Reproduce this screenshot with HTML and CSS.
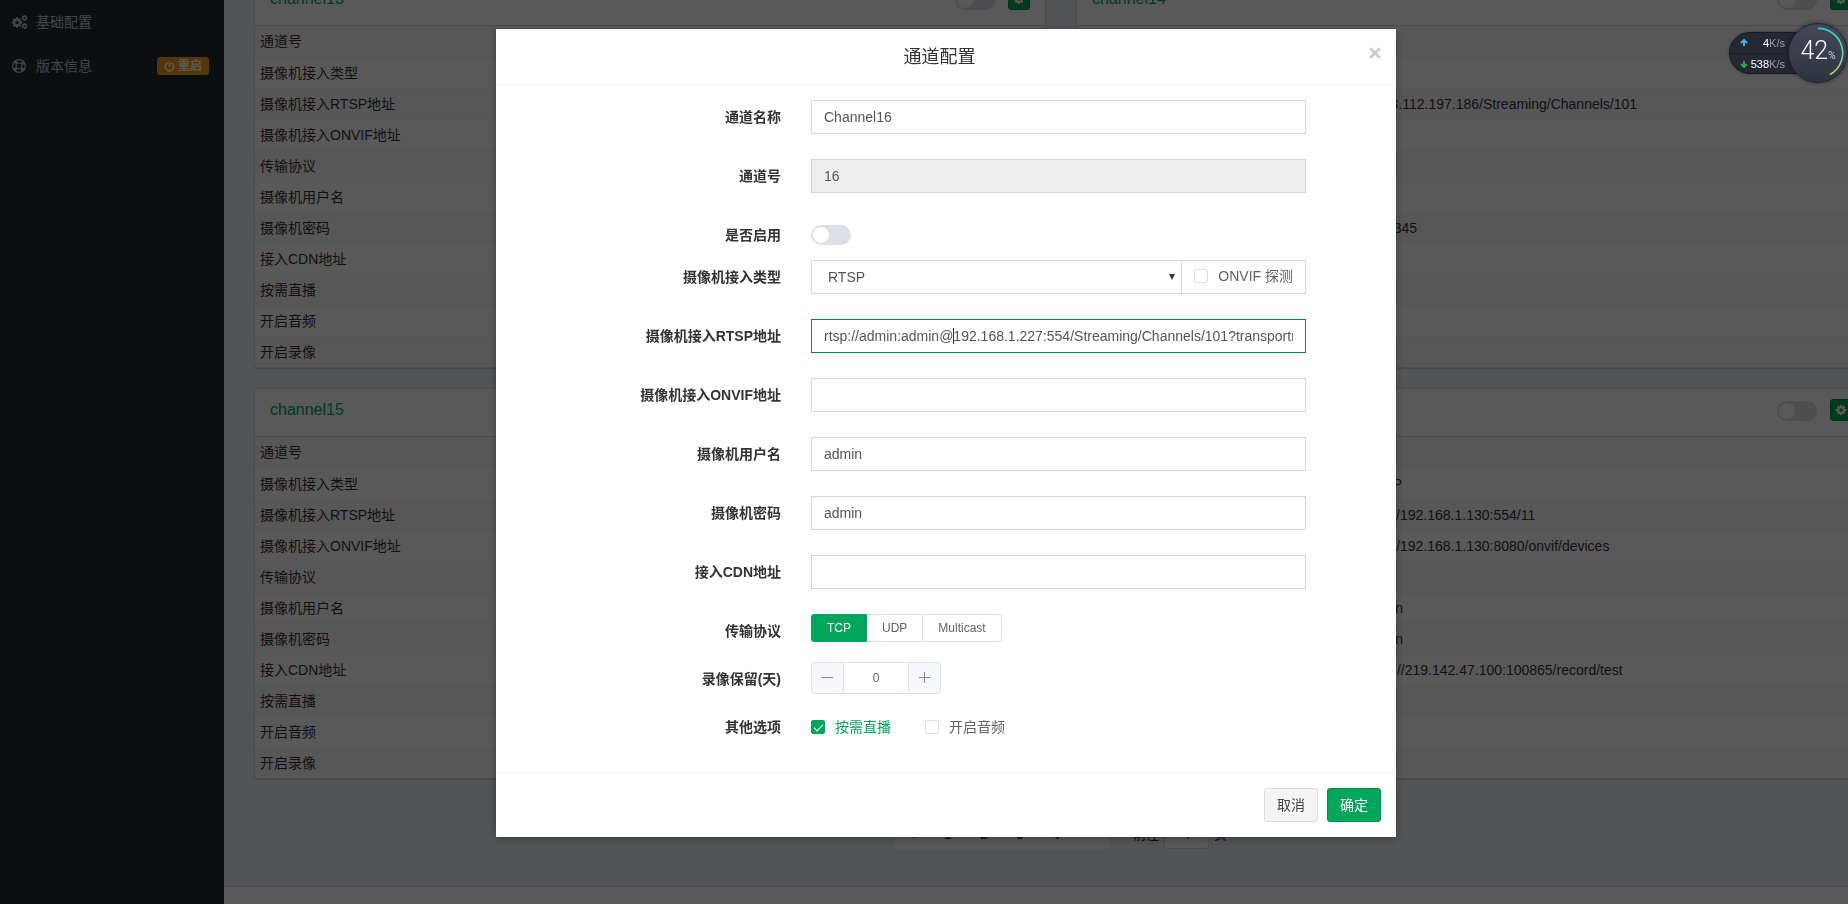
FILE: index.html
```html
<!DOCTYPE html>
<html lang="zh-CN">
<head>
<meta charset="utf-8">
<title>通道配置</title>
<link rel="stylesheet" href="styles.css">
</head>
<body>
<svg class="defs" aria-hidden="true">
  <symbol id="cog" viewBox="0 0 1792 1792"><path d="M1152 896q0-106-75-181t-181-75-181 75-75 181 75 181 181 75 181-75 75-181zm512-109v222q0 12-8 23t-20 13l-185 28q-19 54-39 91 35 50 107 138 10 12 10 25t-9 23q-27 37-99 108t-94 71q-12 0-26-9l-138-108q-44 23-91 38-16 136-29 186-7 28-36 28h-222q-14 0-24.500-8.500t-11.500-21.500l-28-184q-49-16-90-37l-141 107q-10 9-25 9-14 0-25-11-126-114-165-168-7-10-7-23 0-12 8-23 15-21 51-66.500t54-70.500q-27-50-41-99l-183-27q-13-2-21-12.500t-8-23.500v-222q0-12 8-23t19-13l186-28q14-46 39-92-40-57-107-138-10-12-10-24 0-10 9-23 26-36 98.500-107.500t94.500-71.500q13 0 26 10l138 107q44-23 91-38 16-136 29-186 7-28 36-28h222q14 0 24.500 8.500t11.500 21.500l28 184q49 16 90 37l142-107q9-9 24-9 13 0 25 10 129 119 165 170 7 8 7 22 0 12-8 23-15 21-51 66.500t-54 70.500q26 50 41 98l183 28q13 2 21 12.500t8 23.500z"/></symbol>
</svg>
<div class="app">
  <nav class="sidebar">
    <a class="nav-item" href="#config">
      <svg class="nav-icon" viewBox="0 0 16 14"><use href="#cog" x="-1" y="1.500" width="12" height="12"/><use href="#cog" x="9" y="-.5" width="7" height="7"/><use href="#cog" x="9" y="7.500" width="7" height="7"/></svg>
      <span>基础配置</span>
    </a>
    <a class="nav-item" href="#version">
      <svg class="nav-icon" viewBox="0 0 16 14"><g fill="none" stroke="currentColor"><circle cx="7" cy="7" r="6.300" stroke-width="1.300"/><circle cx="7" cy="7" r="3" stroke-width="1.200"/><circle cx="7" cy="7" r="4.700" stroke-width="3" stroke-dasharray="2.600 4.783" stroke-dashoffset="-2.400"/></g></svg>
      <span>版本信息</span>
      <span class="badge"><svg class="badge-icon" viewBox="0 0 12 12"><path d="M3.500 2.400a4.600 4.600 0 1 0 5 0M6 .8v5" fill="none" stroke="currentColor" stroke-width="1.700" stroke-linecap="round"/></svg>重启</span>
    </a>
  </nav>
  <main class="main">
    <div class="cards">
      <section class="card">
        <header class="card-head"><h2>channel13</h2><input class="switch" type="checkbox" aria-label="启用 channel13"><button class="gear" aria-label="配置"><svg viewBox="0 0 12 12"><use href="#cog"/></svg></button></header>
        <table>
          <tr><th>通道号</th><td>13</td></tr><tr><th>摄像机接入类型</th><td></td></tr><tr><th>摄像机接入RTSP地址</th><td></td></tr><tr><th>摄像机接入ONVIF地址</th><td></td></tr><tr><th>传输协议</th><td></td></tr><tr><th>摄像机用户名</th><td></td></tr><tr><th>摄像机密码</th><td></td></tr><tr><th>接入CDN地址</th><td></td></tr><tr><th>按需直播</th><td></td></tr><tr><th>开启音频</th><td></td></tr><tr><th>开启录像</th><td></td></tr>
        </table>
      </section>
      <section class="card card-compact">
        <header class="card-head"><h2>channel14</h2><input class="switch" type="checkbox" aria-label="启用 channel14"><button class="gear" aria-label="配置"><svg viewBox="0 0 12 12"><use href="#cog"/></svg></button></header>
        <table>
          <tr><th>通道号</th><td>14</td></tr><tr><th>摄像机接入类型</th><td>RTSP</td></tr><tr><th>摄像机接入RTSP地址</th><td>rtsp://223.112.197.186/Streaming/Channels/101</td></tr><tr><th>摄像机接入ONVIF地址</th><td></td></tr><tr><th>传输协议</th><td>TCP</td></tr><tr><th>摄像机用户名</th><td>admin</td></tr><tr><th>摄像机密码</th><td>admin12345</td></tr><tr><th>接入CDN地址</th><td></td></tr><tr><th>按需直播</th><td></td></tr><tr><th>开启音频</th><td></td></tr><tr><th>开启录像</th><td></td></tr>
        </table>
      </section>
      <section class="card">
        <header class="card-head"><h2>channel15</h2><input class="switch" type="checkbox" aria-label="启用 channel15"><button class="gear" aria-label="配置"><svg viewBox="0 0 12 12"><use href="#cog"/></svg></button></header>
        <table>
          <tr><th>通道号</th><td>15</td></tr><tr><th>摄像机接入类型</th><td></td></tr><tr><th>摄像机接入RTSP地址</th><td></td></tr><tr><th>摄像机接入ONVIF地址</th><td></td></tr><tr><th>传输协议</th><td></td></tr><tr><th>摄像机用户名</th><td></td></tr><tr><th>摄像机密码</th><td></td></tr><tr><th>接入CDN地址</th><td></td></tr><tr><th>按需直播</th><td></td></tr><tr><th>开启音频</th><td></td></tr><tr><th>开启录像</th><td></td></tr>
        </table>
      </section>
      <section class="card">
        <header class="card-head"><h2>Channel16</h2><input class="switch" type="checkbox" aria-label="启用 Channel16"><button class="gear" aria-label="配置"><svg viewBox="0 0 12 12"><use href="#cog"/></svg></button></header>
        <table>
          <tr><th>通道号</th><td>16</td></tr><tr><th>摄像机接入类型</th><td>RTSP</td></tr><tr><th>摄像机接入RTSP地址</th><td>rtsp://192.168.1.130:554/11</td></tr><tr><th>摄像机接入ONVIF地址</th><td>http://192.168.1.130:8080/onvif/devices</td></tr><tr><th>传输协议</th><td>TCP</td></tr><tr><th>摄像机用户名</th><td>admin</td></tr><tr><th>摄像机密码</th><td>admin</td></tr><tr><th>接入CDN地址</th><td>rtmp://219.142.47.100:100865/record/test</td></tr><tr><th>按需直播</th><td></td></tr><tr><th>开启音频</th><td></td></tr><tr><th>开启录像</th><td></td></tr>
        </table>
      </section>
    </div>
    <div class="pager">
      <div class="pages">
        <button aria-label="上一页"><svg viewBox="0 0 12 12"><path d="M8 1 3 6l5 5"/></svg></button><button>1</button><button>2</button><button>3</button><button>4</button><button class="next" aria-label="下一页"><svg viewBox="0 0 12 12"><path d="m4 1 5 5-5 5"/></svg></button>
      </div>
      <label class="jump">前往<input type="text" value="4">页</label>
    </div>
    <footer class="footer"></footer>
  </main>
</div>

<div class="backdrop">
  <div class="dialog" role="dialog" aria-labelledby="dialog-title">
    <header class="dialog-head">
      <h1 id="dialog-title">通道配置</h1>
      <button class="close" aria-label="关闭"><svg viewBox="0 0 10 10"><path d="m1 1 8 8M9 1 1 9"/></svg></button>
    </header>
    <form class="form">
      <div class="row"><label for="name">通道名称</label><input class="text" id="name" type="text" value="Channel16"></div>
      <div class="row"><label for="number">通道号</label><input class="text" id="number" type="text" value="16" readonly></div>
      <div class="row row-tight"><label for="enable">是否启用</label><div class="field"><input class="switch" id="enable" type="checkbox"></div></div>
      <div class="row"><label for="type">摄像机接入类型</label>
        <div class="group">
          <div class="select"><select id="type"><option>RTSP</option><option>ONVIF</option></select><svg viewBox="0 0 6 6"><path d="M0 0h6L3 6z"/></svg></div>
          <label class="addon"><input class="check" type="checkbox">ONVIF 探测</label>
        </div>
      </div>
      <div class="row"><label for="rtsp">摄像机接入RTSP地址</label><div class="focus-box"><input class="text active" id="rtsp" type="text" value="rtsp://admin:admin@192.168.1.227:554/Streaming/Channels/101?transportmode=unicast"><span class="caret"></span></div></div>
      <div class="row"><label for="onvif">摄像机接入ONVIF地址</label><input class="text" id="onvif" type="text"></div>
      <div class="row"><label for="user">摄像机用户名</label><input class="text" id="user" type="text" value="admin"></div>
      <div class="row"><label for="password">摄像机密码</label><input class="text" id="password" type="text" value="admin"></div>
      <div class="row"><label for="cdn">接入CDN地址</label><input class="text" id="cdn" type="text"></div>
      <div class="row row-short"><span class="label" id="proto">传输协议</span>
        <div class="radios" role="radiogroup" aria-labelledby="proto">
          <label><input type="radio" name="proto" checked><span>TCP</span></label><label><input type="radio" name="proto"><span>UDP</span></label><label><input type="radio" name="proto"><span>Multicast</span></label>
        </div>
      </div>
      <div class="row row-short"><label for="days">录像保留(天)</label>
        <div class="stepper"><button type="button" aria-label="减少"><svg viewBox="0 0 11 11"><path d="M0 5.500h11"/></svg></button><input id="days" type="text" value="0"><button type="button" aria-label="增加"><svg viewBox="0 0 11 11"><path d="M0 5.500h11M5.500 0v11"/></svg></button></div>
      </div>
      <div class="row row-short"><span class="label">其他选项</span>
        <div class="field checks"><label class="on"><input class="check" type="checkbox" checked>按需直播</label><label><input class="check" type="checkbox">开启音频</label></div>
      </div>
    </form>
    <footer class="dialog-foot"><button class="btn">取消</button><button class="btn btn-primary">确定</button></footer>
  </div>
</div>

<aside class="meter">
  <div class="speeds">
    <div><svg class="up" viewBox="0 0 8 8"><path d="M4 7V2M1 4l3-3 3 3"/></svg><b>4</b><i>K/s</i></div>
    <div><svg class="down" viewBox="0 0 8 8"><path d="M4 1v5M1 4l3 3 3-3"/></svg><b>538</b><i>K/s</i></div>
  </div>
  <div class="dial">
    <svg viewBox="0 0 60 60"><defs><linearGradient id="arc" x1="0" y1="0" x2="0" y2="1"><stop offset="0" stop-color="#2fd0c8"/><stop offset=".6" stop-color="#5fd69a"/><stop offset="1" stop-color="#b4d860"/></linearGradient></defs><path d="M30 4.500A25.500 25.500 0 0 1 42.400 52.300" fill="none" stroke="url(#arc)" stroke-width="1.700"/></svg>
    <span>42<small>%</small></span>
  </div>
</aside>
</body>
</html>
```

FILE: styles.css
```css
* { box-sizing: border-box; }
html, body { height: 100%; }
body {
  margin: 0;
  overflow: hidden;
  font: 14px/20px "Liberation Sans", "Noto Sans CJK SC", sans-serif;
  color: #333;
  background: #ecf0f5;
}
button, input, select { font: inherit; color: inherit; margin: 0; }
button { padding: 0; cursor: pointer; }
h1, h2 { margin: 0; font-weight: 400; }
.defs { display: none; }
.app { display: flex; min-height: 100%; }

/* sidebar */
.sidebar { flex: 0 0 224px; background: #222d32; }
.nav-item { display: flex; align-items: center; height: 44px; padding: 0 15px 0 12px; color: #b8c7ce; text-decoration: none; }
.nav-icon { width: 16px; height: 14px; margin-right: 8px; fill: currentColor; }
.badge {
  display: flex; align-items: center; gap: 3px;
  height: 18px; margin-left: auto; padding: 0 7px;
  border-radius: 3px; background: #f39c12; color: #fff;
  font-size: 12px; font-weight: 700; line-height: 18px;
}
.badge-icon { width: 11px; height: 11px; }

/* channel cards */
.main { display: flex; flex-direction: column; flex: 0 0 calc(100% - 174px); margin-top: -23px; }
.cards { display: grid; grid-template-columns: 1fr 1fr; gap: 20px 30px; padding: 0 30px; }
.card { overflow: hidden; border: 1px solid #d9dde2; border-radius: 4px; background: #fff; box-shadow: 0 1px 1px rgba(0, 0, 0, .15); }
.card-head { display: flex; align-items: flex-start; height: 48px; padding: 10px 15px; border-bottom: 1px solid #d2d6de; }
.card-head h2 { flex: 1; font-size: 16px; line-height: 22px; color: #00a65a; }
.card-head .switch { margin: 2px 13px 0 0; }
.gear { width: 22px; height: 22px; border: 1px solid #008d4c; border-radius: 3px; background: #00a65a; }
.gear svg { display: block; width: 12px; height: 12px; margin: 0 auto; fill: #fff; }
table { width: 100%; table-layout: fixed; border-collapse: collapse; }
tr { border-top: 1px solid #f4f4f4; }
tr:first-child { border-top: 0; }
tr:nth-child(odd) { background: #f9f9f9; }
th, td { height: 31px; padding: 0 5px; font-weight: 400; text-align: left; white-space: nowrap; }
th { width: 283px; }
.card-compact th { width: 258px; }

.pager { display: flex; justify-content: center; gap: 24px; padding: 42px 0 37px; font-size: 13px; line-height: 28px; }
.pages { display: flex; background: #fff; }
.pages button { width: 36px; height: 28px; border: 0; background: none; font-weight: 700; }
.pages button:first-child, .pages .next { width: 35px; }
.pages svg { width: 11px; height: 11px; fill: none; stroke: #333; stroke-width: 1; }
.pages .next svg { stroke: #aaa; }
.jump { display: flex; gap: 5px; }
.jump input { width: 45px; height: 28px; border: 1px solid #d2d6de; border-radius: 3px; background: #fff; text-align: center; padding: 0; }
.footer { flex: 1; min-height: 60px; border-top: 1px solid #d2d6de; background: #fff; }

/* switch and tick box */
.switch { appearance: none; flex: none; display: block; width: 40px; height: 20px; padding: 2px; border-radius: 10px; background: #dcdfe6; }
.switch::before { content: ""; display: block; width: 16px; height: 16px; border-radius: 50%; background: #fff; }
.check { appearance: none; flex: none; display: block; width: 14px; height: 14px; border: 1px solid #dcdfe6; border-radius: 2px; background: #fff; }
.check:checked { border-color: #00a65a; background: #00a65a; }
.check:checked::before { content: ""; display: block; width: 4px; height: 8px; margin: 1px 0 0 4px; border: solid #fff; border-width: 0 1px 1px 0; transform: rotate(45deg); }

/* dialog */
.backdrop { position: fixed; inset: 0 -44px 0 0; padding-top: 29px; background: rgba(0, 0, 0, .65); }
.dialog { max-width: 900px; margin: 0 auto; background: #fff; box-shadow: 0 2px 8px rgba(0, 0, 0, .3); }
.dialog-head { position: relative; padding: 16px 28px 14px 15px; border-bottom: 1px solid #f4f4f4; text-align: center; }
.dialog-head h1 { font-size: 18px; line-height: 25px; }
.close { position: absolute; top: 18px; right: 15px; width: 12px; height: 12px; border: 0; background: none; }
.close svg { display: block; width: 12px; height: 12px; fill: none; stroke: #ccc; stroke-width: 2.500; }
.form { padding: 15px 0 14px; }
.row { display: grid; grid-template-columns: 4fr 7fr 1fr; margin-bottom: 25px; align-items: start; }
.row > * { margin: 0 15px; min-width: 0; }
.row > label, .label { font-weight: 700; line-height: 20px; padding-top: 7px; text-align: right; }
.row-tight { margin-bottom: 15px; }
.row-short { margin-bottom: 15px; min-height: 33px; }
.field { padding-top: 7px; }
.text { height: 34px; padding: 6px 12px; border: 1px solid #d2d6de; border-radius: 0; outline: 0; background: #fff; color: #555; }
.text[readonly] { background: #eee; }
.text.active { display: block; width: 100%; border-color: #008d4c; }
.focus-box { position: relative; }
.caret { position: absolute; top: 9px; left: 142px; width: 1px; height: 16px; background: #333; }
.group { display: flex; height: 34px; border: 1px solid #d2d6de; color: #606266; }
.select { position: relative; flex: 1; }
.select select { appearance: none; width: 100%; height: 32px; padding: 0 16px; border: 0; background: #fff; color: #555; }
.select svg { position: absolute; right: 6px; top: 13px; width: 6px; height: 6px; fill: #333; }
.addon { display: flex; align-items: center; gap: 10px; padding: 0 12px 2px; border-left: 1px solid #d2d6de; }

.radios { display: flex; color: #606266; font-size: 12px; line-height: 26px; }
.radios input { position: absolute; opacity: 0; }
.radios span { display: block; padding: 0 15px; border: 1px solid #dcdfe6; border-left: 0; }
.radios label:first-child span { border-left: 1px solid #dcdfe6; border-radius: 3px 0 0 3px; }
.radios label:last-child span { border-radius: 0 3px 3px 0; }
.radios label:first-child input:checked + span { border-color: #00a65a; background: #00a65a; color: #fff; }
.stepper { display: flex; width: 130px; height: 32px; border: 1px solid #dcdfe6; border-radius: 4px; overflow: hidden; }
.stepper button { width: 31px; border: 0; background: #f5f7fa; }
.stepper svg { width: 11px; height: 11px; fill: none; stroke: #888; stroke-width: 1; }
.stepper input { flex: 1; min-width: 0; border: solid #dcdfe6; border-width: 0 1px; background: #fff; color: #606266; text-align: center; font-size: 12px; padding: 0; }
.checks { display: flex; gap: 34px; color: #606266; }
.checks label { display: flex; align-items: center; gap: 10px; }
.checks .on { color: #00a65a; }

.dialog-foot { display: flex; justify-content: flex-end; gap: 9px; padding: 15px; border-top: 1px solid #f4f4f4; }
.btn { width: 54px; height: 34px; border: 1px solid #ddd; border-radius: 3px; background: #f4f4f4; color: #444; }
.btn-primary { border-color: #008d4c; background: #00a65a; color: #fff; }

/* floating network meter */
.meter { position: fixed; top: 23px; right: 0; display: flex; align-items: center; }
.speeds { width: 71px; height: 42px; margin-right: -12px; border: 1px solid #171a22; border-radius: 21px 0 0 21px; background: #242833; color: #fff; font: 11px/20px "Liberation Sans", sans-serif; box-shadow: 0 0 3px rgba(0, 0, 0, .4); }
.speeds div { display: flex; align-items: center; padding: 0 14px 0 10px; }
.speeds div + div { border-top: 1px solid #1b1e27; }
.speeds svg { flex: none; width: 8px; height: 8px; fill: none; stroke-width: 2; }
.up { stroke: #45aee8; }
.down { stroke: #2eaa3c; }
.speeds b { flex: 1; text-align: right; font-weight: 400; }
.speeds i { font-style: normal; color: #9a9ca3; }
.dial { position: relative; display: grid; place-items: center; width: 60px; height: 60px; border: 1px solid #1f222c; border-radius: 50%; background: linear-gradient(#444959, #2f3340); color: #f4f4f4; box-shadow: 0 0 4px rgba(0, 0, 0, .5); }
.dial svg { position: absolute; inset: 0; }
.dial span { font: 300 25px/30px Roboto, sans-serif; }
.dial small { font-size: 10px; }
```
